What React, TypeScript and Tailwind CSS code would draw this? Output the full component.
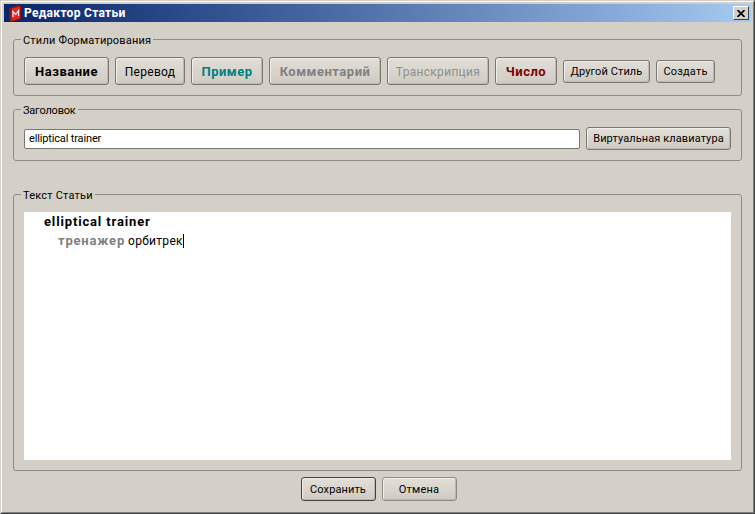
import React from "react";

const FONT = "font-['Roboto','Noto_Sans',sans-serif]";

function Btn({ className, children }: { className: string; children: React.ReactNode }) {
  return (
    <button
      className={`flex items-center justify-center rounded-[3px] border border-[#7b7872] bg-gradient-to-b from-[#e2dfd8] to-[#cfcbc3] pt-[2px] shadow-[inset_1px_1px_0_#f0eee9,inset_-1px_-1px_0_#bdb9b1] ${className}`}
    >
      {children}
    </button>
  );
}

function Group({ title, className, legendClass = "tracking-[0.2px]", children }: { title: string; className: string; legendClass?: string; children: React.ReactNode }) {
  return (
    <fieldset className={`rounded-[3px] border border-[#8f8c85] ${className}`}>
      <legend className={`ml-[7px] h-[13px] px-[2px] text-[11px] leading-[15px] text-black ${legendClass}`}>{title}</legend>
      {children}
    </fieldset>
  );
}

function AppIcon() {
  return (
    <svg width="14" height="17" viewBox="0 0 14 17" className="shrink-0">
      <path d="M1 3 L10 0 L13 1 L13 14 L4 17 L1 15 Z" fill="#8f1010" />
      <path d="M3.5 3.5 L12 1.5 L12 13.5 L3.5 16 Z" fill="#d8282a" />
      <path d="M5 12 V6.5 L7.7 9.5 L10.5 5.5 V11" fill="none" stroke="#f4e6e0" strokeWidth="1.3" />
    </svg>
  );
}

export default function App() {
  return (
    <div className={`h-[514px] w-[755px] overflow-hidden border border-t-[#d4d0c8] border-l-[#d4d0c8] border-r-[#404040] border-b-[#404040] ${FONT}`}>
      <div className="h-full border border-t-white border-l-white border-r-[#808080] border-b-[#808080] bg-[#d4d0c8] p-[2px]">
        <div className="flex h-[18px] items-center bg-gradient-to-r from-[#0a246a] to-[#a6caf0] pl-[4px] pr-[2px]">
          <AppIcon />
          <span className="ml-[2px] text-[12px] font-bold leading-none tracking-[0.3px] text-white">Редактор Статьи</span>
          <button className="ml-auto flex h-[14px] w-[16px] items-center justify-center border border-t-white border-l-white border-r-[#404040] border-b-[#404040] bg-[#d4d0c8]">
            <svg width="8" height="7" viewBox="0 0 8 7">
              <path d="M0.5 0 L7.5 7 M7.5 0 L0.5 7" stroke="black" strokeWidth="1.6" />
            </svg>
          </button>
        </div>

        <div className="flex flex-col px-[9px] pt-[11px]">
          <Group title="Стили Форматирования" className="h-[63px]">
            <div className="flex items-center gap-[6px] pl-[10px] pt-[11px]">
              <Btn className="h-[28px] w-[85px] text-[13px] font-bold tracking-[0.5px] text-black">Название</Btn>
              <Btn className="h-[28px] w-[70px] text-[12px] tracking-[0.3px] text-black">Перевод</Btn>
              <Btn className="h-[28px] w-[72px] text-[13px] font-bold tracking-[0.5px] text-[#008080]">Пример</Btn>
              <Btn className="h-[28px] w-[112px] text-[13px] font-bold tracking-[0.5px] text-[#808080]">Комментарий</Btn>
              <Btn className="h-[28px] w-[102px] text-[12px] tracking-[0.3px] text-[#8f8f8f]">Транскрипция</Btn>
              <Btn className="h-[28px] w-[62px] text-[13px] font-bold tracking-[0.5px] text-[#800000]">Число</Btn>
              <Btn className="h-[23px] w-[87px] text-[11px] tracking-[0.1px] text-black">Другой Стиль</Btn>
              <Btn className="h-[23px] w-[59px] text-[11px] tracking-[0.2px] text-black">Создать</Btn>
            </div>
          </Group>

          <Group title="Заголовок" className="mt-[7px] h-[58px]" legendClass="tracking-[-0.2px]">
            <div className="flex items-center gap-[6px] pl-[10px] pt-[11px]">
              <input
                readOnly
                value="elliptical trainer"
                className="h-[20px] w-[556px] rounded-[2px] border border-[#7b7872] bg-white px-[4px] text-[11px] tracking-[-0.15px] text-black outline-none"
              />
              <Btn className="h-[23px] w-[145px] text-[11px] tracking-[0.1px] text-black">Виртуальная клавиатура</Btn>
            </div>
          </Group>

          <Group title="Текст Статьи" className="mt-[27px] h-[283px]">
            <div className="mx-[10px] mt-[11px] h-[248px] bg-white pl-[20px]">
              <div className="text-[13px] font-bold leading-[19px] tracking-[0.85px] text-black">elliptical trainer</div>
              <div className="pl-[14px] text-[12px] leading-[19px] text-black">
                <span className="text-[13px] font-bold tracking-[0.8px] text-[#808080]">тренажер</span> <span className="border-r border-black tracking-[0.3px]">орбитрек</span>
              </div>
            </div>
          </Group>

          <div className="mt-[6px] flex justify-center gap-[6px] pl-[2px]">
            <Btn className="h-[24px] w-[75px] border-[#404040] text-[11px] tracking-[0.1px] text-black">Сохранить</Btn>
            <Btn className="h-[24px] w-[75px] border-[#8f8c85] text-[11px] tracking-[0.2px] text-black">Отмена</Btn>
          </div>
        </div>
      </div>
    </div>
  );
}
